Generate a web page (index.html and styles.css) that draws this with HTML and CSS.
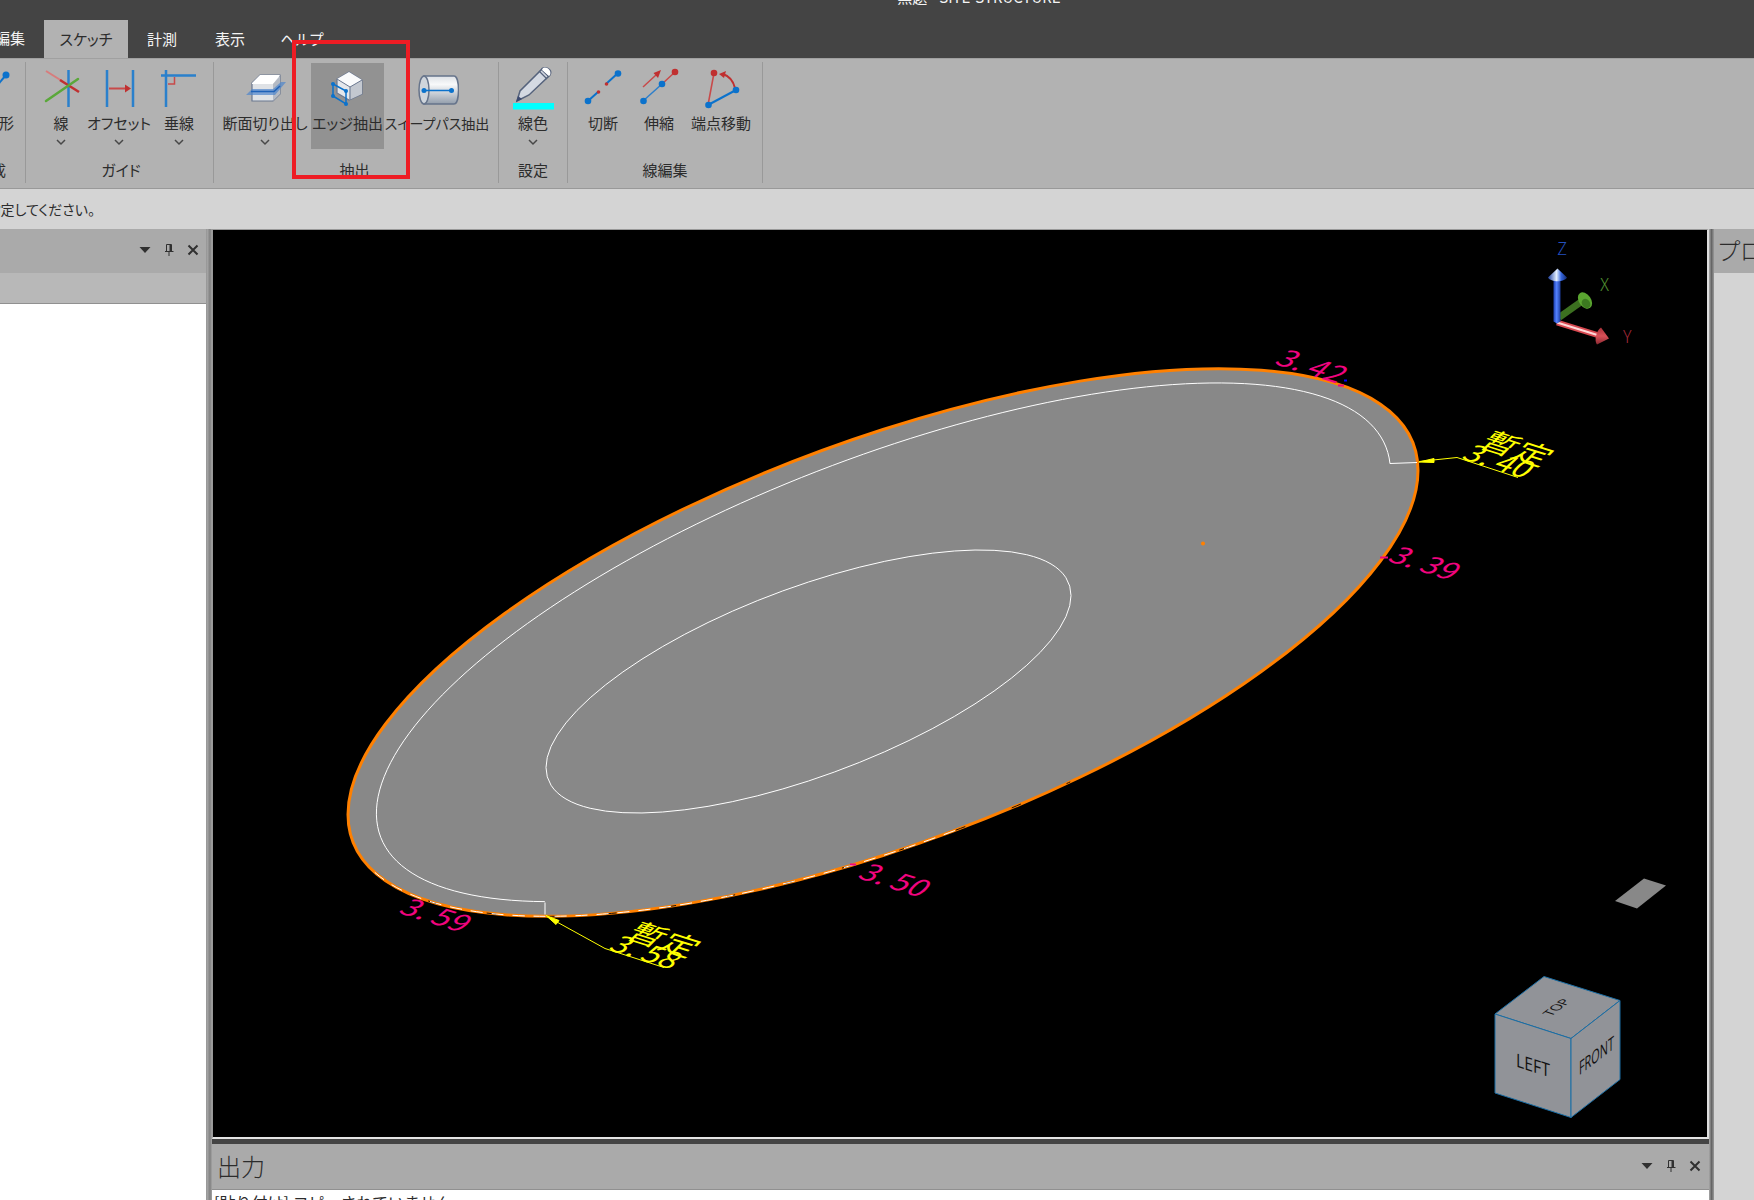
FILE: index.html
```html
<!DOCTYPE html>
<html lang="ja">
<head>
<meta charset="utf-8">
<title>無題 - SITE-STRUCTURE</title>
<link rel="stylesheet" href="styles.css">
</head>
<body>
<div class="app">
  <header class="titlebar">
    <div class="title">無題 - SITE-STRUCTURE</div>
    <nav class="tabs">
      <button class="tab tab-cut">編集</button>
      <button class="tab tab-wide active">スケッチ</button>
      <button class="tab">計測</button>
      <button class="tab">表示</button>
      <button class="tab tab-help">ヘルプ</button>
    </nav>
  </header>

  <section class="ribbon">
    <div class="group group-cut">
      <div class="tools">
        <button class="tool tool-cut">
          <svg class="icon" viewBox="-18 66 44 44"><path d="M-14 98L6 75" stroke="#0b72cc" stroke-width="2"/><circle cx="6" cy="75" r="3.500" fill="#0b72cc"/></svg>
          <span>図形</span>
        </button>
      </div>
      <div class="group-name">作成</div>
    </div>

    <div class="group group-guide">
      <div class="tools">
        <button class="tool w50">
          <svg class="icon" viewBox="39 66 44 44" fill="none"><path d="M68.500 70V107" stroke="#2a80cc" stroke-width="2.500"/><path d="M46 71L62 81" stroke="#d87c7c" stroke-width="2"/><path d="M60 80L79 92" stroke="#c03030" stroke-width="2.500"/><path d="M46 101L78 79" stroke="#5aa83a" stroke-width="2.500" stroke-linecap="round"/></svg>
          <span>線</span>
          <svg class="chev" viewBox="0 0 12 12"><path d="M2 4l4 4 4-4"/></svg>
        </button>
        <button class="tool w66">
          <svg class="icon" viewBox="97 66 44 44" fill="none"><path d="M107 70V107M133 70V107" stroke="#2a80cc" stroke-width="2.500"/><path d="M109 88.500H126" stroke="#c84a4a" stroke-width="2"/><path d="M125 84.500L131 88.500L125 92.500Z" fill="#c03030"/></svg>
          <span>オフセット</span>
          <svg class="chev" viewBox="0 0 12 12"><path d="M2 4l4 4 4-4"/></svg>
        </button>
        <button class="tool w54">
          <svg class="icon" viewBox="157 66 44 44" fill="none"><path d="M161 75.500H196M166 70V107" stroke="#2a80cc" stroke-width="2.500"/><path d="M168 84H174.500V77" stroke="#c84a4a" stroke-width="1.500"/></svg>
          <span>垂線</span>
          <svg class="chev" viewBox="0 0 12 12"><path d="M2 4l4 4 4-4"/></svg>
        </button>
      </div>
      <div class="group-name">ガイド</div>
    </div>

    <div class="group group-extract">
      <div class="tools">
        <button class="tool w92">
          <svg class="icon" viewBox="243 66 44 44"><path d="M252 83L260 75H280V94L273 101H252Z" fill="#dfe2e6" stroke="#6b7890" stroke-width="1.200"/><path d="M252 83L260 75H280L273 84H252Z" fill="#fff"/><path d="M273 84V101L280 94V76Z" fill="#b4bac4"/><path d="M246 95L252 89H273L281 82H286L275 95Z" fill="#4f86cc" opacity=".7"/><path d="M251 91.500H274L280 86" fill="none" stroke="#1e62b8" stroke-width="1.500"/></svg>
          <span>断面切り出し</span>
          <svg class="chev" viewBox="0 0 12 12"><path d="M2 4l4 4 4-4"/></svg>
        </button>
        <button class="tool w73 selected">
          <svg class="icon" viewBox="325 66 44 44"><path d="M336 79L348 72L361 80V94L348 100L336 93Z" fill="#e4e7eb" stroke="#6b7890" stroke-width="1.200"/><path d="M336 79L348 72L361 80L349 87Z" fill="#fafbfc"/><path d="M349 87L361 80V94L348 100Z" fill="#c3c8d0"/><path d="M336 79L349 87L361 80M349 87V100" fill="none" stroke="#6b7890"/><path d="M332 84L345 91V104L332 96Z" fill="none" stroke="#0b72cc" stroke-width="1.500"/><g fill="#0b72cc"><circle cx="332" cy="84" r="2"/><circle cx="345" cy="91" r="2"/><circle cx="345" cy="104" r="2"/><circle cx="332" cy="96" r="2"/></g></svg>
          <span>エッジ抽出</span>
        </button>
        <button class="tool w106 long">
          <svg class="icon" viewBox="415 66 44 44"><defs><linearGradient id="cyl" x1="0" y1="0" x2="0" y2="1"><stop offset="0" stop-color="#dde1e6"/><stop offset=".3" stop-color="#f8f9fa"/><stop offset="1" stop-color="#929dab"/></linearGradient></defs><path d="M424 76H454C460 76 460 104 454 104H424Z" fill="url(#cyl)" stroke="#66748b" stroke-width="1.500"/><ellipse cx="424" cy="90" rx="5" ry="14" fill="#cfd5dc" stroke="#66748b" stroke-width="1.500"/><path d="M424 90.500H451" stroke="#0b72cc" stroke-width="1.500"/><circle cx="424" cy="90.500" r="2.500" fill="#0b72cc"/><circle cx="451.500" cy="90.500" r="2.500" fill="#0b72cc"/></svg>
          <span>スイープパス抽出</span>
        </button>
      </div>
      <div class="group-name">抽出</div>
    </div>

    <div class="group group-set">
      <div class="tools">
        <button class="tool w68">
          <svg class="icon" viewBox="511 66 44 44"><path d="M513 103H554V109.500H513Z" fill="#0ff"/><path d="M517 101L520 91L541 70C544 65 553 69 550 75L529 95Z" fill="#d4d9e2" stroke="#56637c" stroke-width="1.500"/><path d="M539 71L547 79M541 69L549 77" stroke="#56637c" stroke-width="1.200"/><path d="M543 68C546 66 552 70 550 75L549 76L542 70Z" fill="#fff"/><path d="M516 102L518 96L522 99Z" fill="#3c4a70"/></svg>
          <span>線色</span>
          <svg class="chev" viewBox="0 0 12 12"><path d="M2 4l4 4 4-4"/></svg>
        </button>
      </div>
      <div class="group-name">設定</div>
    </div>

    <div class="group group-edit">
      <div class="tools">
        <button class="tool w54">
          <svg class="icon" viewBox="581 66 44 44"><path d="M588 101L598 92M606 84L618 73" stroke="#0b72cc" stroke-width="2"/><g fill="#0b72cc"><circle cx="588" cy="101" r="3.300"/><circle cx="618" cy="73.500" r="3.300"/></g><g fill="#c03030"><circle cx="598.500" cy="92" r="1.800"/><circle cx="606.500" cy="84" r="1.800"/></g></svg>
          <span>切断</span>
        </button>
        <button class="tool w58">
          <svg class="icon" viewBox="637 66 44 44"><path d="M643 101L662 84" stroke="#2d7fca" stroke-width="1.500"/><path d="M662 84L675 72M643 87L656 75" stroke="#c84a4a" stroke-width="1.500"/><path d="M661 70L658 78L653.500 73Z" fill="#c03030"/><circle cx="643.500" cy="101" r="3.300" fill="#0b72cc"/><circle cx="662" cy="84" r="3.300" fill="#0b72cc"/><circle cx="675" cy="72" r="3.300" fill="#c03030"/></svg>
          <span>伸縮</span>
        </button>
        <button class="tool w66">
          <svg class="icon" viewBox="699 66 44 44" fill="none"><path d="M708 105L714 73" stroke="#c84a4a" stroke-width="1.500"/><path d="M708 105L736 90" stroke="#0b72cc" stroke-width="2"/><path d="M735 88C733 80 729 76 723 74" stroke="#c03030" stroke-width="2"/><path d="M719 74L726 71L724 78Z" fill="#c03030"/><circle cx="714" cy="73" r="3.300" fill="#c03030"/><circle cx="708.500" cy="105" r="3.300" fill="#0b72cc"/><circle cx="736" cy="90" r="3.300" fill="#0b72cc"/></svg>
          <span>端点移動</span>
        </button>
      </div>
      <div class="group-name">線編集</div>
    </div>
    <div class="highlight"></div>
  </section>

  <div class="message"><span>指定してください。</span></div>

  <main class="workspace">
    <aside class="left-panel">
      <div class="panel-head">
        <button class="mini" aria-label="メニュー"><svg viewBox="0 0 12 12"><path d="M.500 3H11.500L6 9Z" fill="#303030"/></svg></button>
        <button class="mini" aria-label="固定"><svg viewBox="0 0 12 12" fill="none" stroke="#303030"><path d="M3.500 7V.500H8.500V7M2 7.500H10.500M6 8V12"/><path d="M7.500 1V7" stroke-width="2"/></svg></button>
        <button class="mini" aria-label="閉じる"><svg viewBox="0 0 12 12"><path d="M1.500 1.500L10.500 10.500M10.500 1.500L1.500 10.500" stroke="#303030" stroke-width="2"/></svg></button>
      </div>
      <div class="panel-sub"></div>
      <div class="panel-body"></div>
    </aside>
    <div class="splitter"></div>

    <div class="center">
      <div class="viewport">
        <svg class="scene" viewBox="213 230 1494 906">
          <defs>
            <linearGradient id="bl"><stop offset="0" stop-color="#1d3fae"/><stop offset=".45" stop-color="#5482ff"/><stop offset="1" stop-color="#1c3c9c"/></linearGradient>
            <linearGradient id="cone"><stop offset="0" stop-color="#1a3c9c"/><stop offset=".45" stop-color="#e4f0ff"/><stop offset=".7" stop-color="#3565dd"/><stop offset="1" stop-color="#12286a"/></linearGradient>
            <linearGradient id="rd" x1="0" y1="0" x2="0" y2="1"><stop offset="0" stop-color="#a83038"/><stop offset=".5" stop-color="#d85058"/><stop offset="1" stop-color="#8a2830"/></linearGradient>
          </defs>

          <circle class="outline" r="100" transform="matrix(5.350 -1.720 0 2.130 883 642)"/>
          <g fill="none">
            <path class="dash-dark" d="M-85 52.700A100 100 0 0 0 35 93.700" transform="matrix(5.350 -1.720 0 2.130 883 642)"/>
            <path class="dash-light" d="M-95 31.200A100 100 0 0 0 15 98.900" transform="matrix(5.350 -1.720 0 2.130 883 642)"/>
            <path class="thin" d="M100 -4A100 100 0 1 0 -66.700 74.400" transform="matrix(5.070 -1.710 0 1.950 883 642)"/>
            <path class="thin" d="M1390 463L1417 462M545 902V914"/>
            <circle class="thin" r="100" transform="matrix(2.625 -.860 0 .995 808.500 681)"/>
          </g>
          <circle cx="1203" cy="543" r="2" fill="#ff8000"/>
          <path d="M1615 900.500L1644 878L1666 885L1637 908Z" fill="#888"/>

          <g class="dim">
            <text transform="matrix(.95 .3 -.66 .64 1273 363)">3. 42</text>
            <text transform="matrix(.95 .3 -.66 .64 1386 560)">3. 39</text>
            <text transform="matrix(.95 .3 -.66 .64 856 877)">3. 50</text>
            <text transform="matrix(.95 .3 -.66 .64 397 912)">3. 59</text>
            <path d="M1338 384h6v2h-6zM1380 556h8v2h-8zM850 863h6v2h-6z"/>
          </g>
          <path d="M1344 379h3v2h-3z" fill="#00f"/>

          <g class="note">
            <path d="M1419 461L1457 457L1518 477"/>
            <path d="M1419 461.500L1434 458V462Z" fill="#ff0"/>
            <text transform="matrix(.95 .3 -.66 .64 1460 458)">3. 40</text>
            <text class="kanji" transform="matrix(.95 .3 -.62 .62 1477 446)">暫定</text>
            <path d="M547 916L605 948L664 967"/>
            <path d="M546 915L559 920L556 924Z" fill="#ff0"/>
            <text transform="matrix(.95 .3 -.66 .64 607 949)">3. 58</text>
            <text class="kanji" transform="matrix(.95 .3 -.62 .62 624 937)">暫定</text>
          </g>

          <g class="axes">
            <path d="M1559 317L1583 300" stroke="#3c7020" stroke-width="7"/>
            <ellipse cx="1585" cy="300" rx="6" ry="9" transform="rotate(-35 1585 300)" fill="#5aa530"/>
            <ellipse cx="1586" cy="303" rx="4" ry="5" transform="rotate(-35 1586 303)" fill="#3c7a20"/>
            <path d="M1557 322L1599 335" stroke="#d84850" stroke-width="6"/>
            <path d="M1557 322L1599 335" stroke="#ffd8d8" stroke-width="2"/>
            <path d="M1601 327L1609 338L1597 344C1594 341 1596 330 1601 327Z" fill="url(#rd)"/>
            <path d="M1553.500 279H1560.500V321L1557 323L1553.500 321Z" fill="url(#bl)"/>
            <path d="M1557.500 268L1567 277C1564 282 1551 282 1548 277Z" fill="url(#cone)"/>
            <text x="1557" y="254" fill="#2450c0">Z</text>
            <text x="1600" y="290" fill="#509030">X</text>
            <text x="1623" y="342" fill="#a02838">Y</text>
          </g>

          <g class="cube">
            <path d="M1495 1013.500L1544 976L1620 1000L1571 1038Z"/>
            <path d="M1495 1013.500L1571 1038V1117L1495 1092.500Z"/>
            <path d="M1571 1038L1620 1000V1079L1571 1117Z"/>
            <text transform="matrix(.62 -.47 .75 .24 1551 1016)">TOP</text>
            <text transform="matrix(.93 .3 0 1.100 1516 1066)">LEFT</text>
            <text transform="matrix(.64 -.49 0 1.100 1579 1075)">FRONT</text>
          </g>
        </svg>
      </div>
      <section class="output">
        <div class="panel-head output-head">
          <h2>出力</h2>
          <button class="mini" aria-label="メニュー"><svg viewBox="0 0 12 12"><path d="M.500 3H11.500L6 9Z" fill="#303030"/></svg></button>
          <button class="mini" aria-label="固定"><svg viewBox="0 0 12 12" fill="none" stroke="#303030"><path d="M3.500 7V.500H8.500V7M2 7.500H10.500M6 8V12"/><path d="M7.500 1V7" stroke-width="2"/></svg></button>
          <button class="mini" aria-label="閉じる"><svg viewBox="0 0 12 12"><path d="M1.500 1.500L10.500 10.500M10.500 1.500L1.500 10.500" stroke="#303030" stroke-width="2"/></svg></button>
        </div>
        <div class="log">[貼り付け] コピーされていません</div>
      </section>
    </div>

    <div class="splitter splitter-right"></div>
    <aside class="right-panel">
      <div class="panel-head right-head"><h2>プロパティ</h2></div>
    </aside>
  </main>
</div>
</body>
</html>
```
FILE: styles.css
```css
* { box-sizing: border-box; }

body {
  margin: 0;
  font-family: "Noto Sans CJK JP", sans-serif;
  font-size: 15px;
  font-feature-settings: "palt";
  color: #2c2c2c;
}

button {
  margin: 0;
  padding: 0;
  border: 0;
  background: none;
  font: inherit;
  font-feature-settings: inherit;
  color: inherit;
}

h2 { margin: 0; font-size: 24px; font-weight: 300; line-height: 36px; white-space: nowrap; }

.app { display: flex; flex-direction: column; height: 100vh; overflow: hidden; }

/* Title and tabs */
.titlebar {
  display: flex;
  flex-direction: column;
  flex: none;
  height: 58px;
  overflow: hidden;
  background: #444;
  color: #f4f4f4;
}
.title { height: 20px; margin-top: -15px; padding-left: 204px; line-height: 24px; text-align: center; }
.tabs { display: flex; margin-top: 15px; height: 38px; }
.tab { width: 68px; line-height: 36px; white-space: nowrap; }
.tab-cut { display: flex; justify-content: flex-end; width: 44px; padding-right: 19px; overflow: hidden; }
.tab-wide { width: 84px; }
.tab-help { width: 76px; }
.tab.active { background: #b2b2b2; color: #2c2c2c; }

/* Ribbon */
.ribbon {
  position: relative;
  display: flex;
  flex: none;
  height: 131px;
  padding: 3px 0 5px;
  background: #b2b2b2;
  border-top: 1px solid #a0a0a0;
  border-bottom: 1px solid #999;
}
.group { display: flex; flex-direction: column; flex: none; border-right: 1px solid #999; }
.group-cut { width: 26px; overflow: hidden; align-items: flex-end; }
.group-cut .group-name { padding-right: 19px; white-space: nowrap; }
.group-guide { width: 188px; padding-left: 10px; padding-right: 7px; }
.group-extract { width: 285px; padding-left: 5px; padding-right: 8px; }
.group-set { width: 69px; }
.group-edit { width: 195px; padding: 0 8px; }
.tools { display: flex; height: 87px; margin-top: 1px; }
.group-name { margin-top: 10px; line-height: 20px; text-align: center; }

.tool { display: flex; flex-direction: column; align-items: center; height: 86px; padding-top: 3px; }
.tool span { line-height: 26px; white-space: nowrap; }
.tool.long { font-size: 14px; }
.tool.selected { background: #929292; }
.tool-cut { align-items: flex-end; padding-right: 11px; }
.icon { flex: none; width: 44px; height: 44px; }
.tool-cut .icon { margin-right: -12px; }
.chev { flex: none; width: 12px; height: 12px; fill: none; stroke: #484848; stroke-width: 1.5; }
.w50 { width: 50px; }
.w54 { width: 54px; }
.w58 { width: 58px; }
.w66 { width: 66px; }
.w68 { width: 68px; }
.w73 { width: 73px; }
.w92 { width: 92px; }
.w106 { width: 106px; }

.highlight {
  position: absolute;
  left: 292px;
  top: -19px;
  width: 118px;
  height: 139px;
  border: 4px solid #ee1c24;
  z-index: 2;
}

/* Message strip */
.message {
  display: flex;
  align-items: center;
  justify-content: flex-end;
  flex: none;
  width: 100%;
  height: 40px;
  padding-right: calc(100% - 95px);
  background: #d4d4d4;
  font-size: 14px;
  white-space: nowrap;
}

/* Docked panels */
.workspace { display: flex; flex: 1; min-height: 0; }
.left-panel { display: flex; flex-direction: column; width: 207px; flex: none; border-right: 1px solid #999; }
.panel-head {
  display: flex;
  align-items: center;
  justify-content: flex-end;
  gap: 12px;
  flex: none;
  height: 44px;
  padding-right: 7px;
  padding-bottom: 2px;
  background: #aaa;
}
.panel-sub { flex: none; height: 31px; background: #b8b8b8; border-bottom: 1px solid #909090; }
.panel-body { flex: 1; background: #fff; }
.mini { display: flex; width: 12px; height: 12px; }
.mini svg { width: 12px; height: 12px; }

.splitter { flex: none; width: 5px; background: linear-gradient(90deg, #a8a8a8, #808080 60%, #a4a4a4); }
.splitter-right { background: linear-gradient(90deg, #aaa, #666 50%, #999); }

.center { display: flex; flex-direction: column; flex: 1; min-width: 0; }
.viewport {
  flex: 1;
  min-height: 0;
  background: #000;
  border: 1px solid #999;
  border-right: 2px solid #ddd;
  border-bottom: 2px solid #e4e4e4;
}
.scene { display: block; width: 100%; height: 100%; }

.output { flex: none; height: 61px; border-top: 5px solid #444; overflow: hidden; background: #fff; }
.output-head { height: 46px; padding-left: 5px; padding-right: 8px; border-bottom: 1px solid #909090; }
.output-head h2 { margin-right: auto; }
.log { padding-left: 2px; font-size: 16px; font-feature-settings: normal; line-height: 24px; white-space: nowrap; }

.right-panel { flex: none; width: 40px; background: #d4d4d4; overflow: hidden; }
.right-head { justify-content: flex-start; padding: 0 0 2px 4px; }

/* Scene */
.outline { fill: #888; stroke: #ff8000; stroke-width: 3; vector-effect: non-scaling-stroke; }
.thin { stroke: #fff; stroke-width: 1; vector-effect: non-scaling-stroke; }
.dash-dark { stroke: #201000; stroke-width: 1; stroke-dasharray: 10 50; vector-effect: non-scaling-stroke; }
.dash-light { stroke: #fff; stroke-width: 1; stroke-dasharray: 12 9; vector-effect: non-scaling-stroke; }
.dim { fill: #f0047f; font-size: 31px; font-weight: 400; }
.note { fill: none; stroke: #ff0; stroke-width: 1; }
.note text { fill: #ff0; stroke: none; font-size: 31px; font-weight: 400; }
.note .kanji { font-size: 34px; }
.axes { font-size: 17px; font-weight: 300; }
.cube { fill: #919398; stroke: #1a6ea5; stroke-width: 1; }
.cube text { fill: #111; stroke: none; font-family: "Open Sans", sans-serif; font-size: 17px; }
```
